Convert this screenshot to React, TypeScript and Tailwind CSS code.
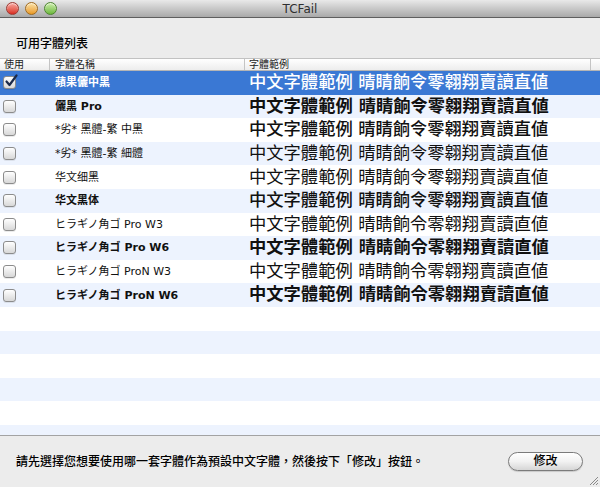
import React from 'react';

const FONT = '"DejaVu Sans", "Noto Sans CJK TC", sans-serif';

type Font = {
  name: string;
  nameBold: boolean;
  sample: string; // tailwind weight class
  lang: 'tc' | 'sc' | 'jp';
};

const FONTS: Font[] = [
  { name: '蘋果儷中黑', nameBold: true, sample: 'font-medium', lang: 'tc' },
  { name: '儷黑 Pro', nameBold: true, sample: 'font-bold', lang: 'tc' },
  { name: '*劣* 黑體-繁 中黑', nameBold: false, sample: 'font-medium', lang: 'tc' },
  { name: '*劣* 黑體-繁 細體', nameBold: false, sample: 'font-normal', lang: 'tc' },
  { name: '华文细黑', nameBold: false, sample: 'font-normal', lang: 'sc' },
  { name: '华文黑体', nameBold: true, sample: 'font-medium', lang: 'sc' },
  { name: 'ヒラギノ角ゴ Pro W3', nameBold: false, sample: 'font-normal', lang: 'jp' },
  { name: 'ヒラギノ角ゴ Pro W6', nameBold: true, sample: 'font-bold', lang: 'jp' },
  { name: 'ヒラギノ角ゴ ProN W3', nameBold: false, sample: 'font-normal', lang: 'jp' },
  { name: 'ヒラギノ角ゴ ProN W6', nameBold: true, sample: 'font-bold', lang: 'jp' },
];

const SAMPLE = '中文字體範例 晴睛餉令零翱翔賣讀直値';

const familyFor = (lang: Font['lang']) =>
  lang === 'jp'
    ? '"DejaVu Sans", "Noto Sans CJK JP", sans-serif'
    : lang === 'sc'
    ? '"DejaVu Sans", "Noto Sans CJK TC", "Noto Sans CJK SC", sans-serif'
    : FONT;

function Checkbox({ checked }: { checked?: boolean }) {
  return (
    <div className="relative w-[13px] h-[13px] rounded-[3px] border border-[#8c8c8c] bg-gradient-to-b from-white to-[#d8d8d8] shadow-[0_1px_0_rgba(0,0,0,0.08)]">
      {checked && (
        <svg viewBox="0 0 14 14" className="absolute -top-[3px] left-[0px] w-[14px] h-[14px]">
          <path d="M2.5 7.5 L5.5 11 L12.5 1.5" fill="none" stroke="#1b2a4a" strokeWidth="2.2" strokeLinecap="round" strokeLinejoin="round" />
        </svg>
      )}
    </div>
  );
}

function Light({ from, to, ring }: { from: string; to: string; ring: string }) {
  return (
    <div className={`w-[13px] h-[13px] rounded-full border ${ring} bg-gradient-to-b ${from} ${to} shadow-[inset_0_1px_1px_rgba(255,255,255,0.6)]`} />
  );
}

export default function App() {
  const empty = Array.from({ length: 6 }, (_, i) => i);

  return (
    <div className="w-[600px] h-[487px] bg-[#ececec] flex flex-col relative overflow-hidden text-black" style={{ fontFamily: FONT }}>
      {/* title bar */}
      <div className="h-[18px] shrink-0 relative flex items-center justify-center bg-gradient-to-b from-[#e9e9e9] to-[#a9a9a9] border-b border-[#5e5e5e]">
        <div className="absolute left-[6px] top-[2px] flex gap-[6px]">
          <Light from="from-[#f7a6a0]" to="to-[#d8281f]" ring="border-[#9c3a33]" />
          <Light from="from-[#fbe2a2]" to="to-[#e89a1d]" ring="border-[#a06a1f]" />
          <Light from="from-[#cdeeaa]" to="to-[#6cb83a]" ring="border-[#4d8430]" />
        </div>
        <span className="text-[12px] leading-none text-[#2f2f2f]">TCFail</span>
      </div>

      {/* label */}
      <div className="pt-[18px] pb-[6px] pl-[16px] h-[40px] shrink-0 flex items-center">
        <span className="text-[12px] leading-none font-medium">可用字體列表</span>
      </div>

      {/* table */}
      <div className="flex-1 flex flex-col bg-white min-h-0">
        <div className="h-[13px] shrink-0 flex border-t border-[#c2c2c2] border-b border-b-[#b5b5b5] bg-gradient-to-b from-white to-[#ededed] text-[10px] leading-none text-[#1a1a1a]">
          <div className="w-[50px] border-r border-[#c4c4c4] pl-[4px] flex items-center">使用</div>
          <div className="w-[195px] border-r border-[#c4c4c4] pl-[5px] flex items-center">字體名稱</div>
          <div className="w-[346px] border-r border-[#c4c4c4] pl-[4px] flex items-center">字體範例</div>
          <div className="flex-1" />
        </div>

        <div className="flex-1 flex flex-col overflow-hidden">
          {FONTS.map((f, i) => {
            const selected = i === 0;
            const bg = selected ? 'bg-[#3a78d4]' : i % 2 === 1 ? 'bg-[#edf3fe]' : 'bg-white';
            return (
              <div key={i} className={`h-[23.6px] shrink-0 flex items-center ${bg}`}>
                <div className="w-[50px] pl-[3px] flex items-center">
                  <Checkbox checked={selected} />
                </div>
                <div
                  className={`w-[195px] pl-[5px] text-[11px] leading-none whitespace-nowrap ${f.nameBold ? 'font-bold' : 'font-normal'} ${selected ? 'text-white' : 'text-[#111]'}`}
                  style={{ fontFamily: familyFor(f.lang) }}
                >
                  {f.name}
                </div>
                <div
                  className={`pl-[4px] text-[17.3px] leading-none whitespace-nowrap ${f.sample} ${selected ? 'text-white' : 'text-[#111]'}`}
                  style={{ fontFamily: familyFor(f.lang) }}
                >
                  {SAMPLE}
                </div>
              </div>
            );
          })}
          {empty.map(i => (
            <div key={`e${i}`} className={`h-[23.6px] shrink-0 ${i % 2 === 1 ? 'bg-[#edf3fe]' : 'bg-white'}`} />
          ))}
        </div>
      </div>

      {/* footer */}
      <div className="h-[52px] shrink-0 border-t border-[#a3a3a3] bg-[#ececec] flex items-center pl-[16px] pr-[17px] pb-[1px]">
        <span className="flex-1 text-[12px] leading-none font-medium pt-[2px]">請先選擇您想要使用哪一套字體作為預設中文字體，然後按下「修改」按鈕。</span>
        <button className="w-[75px] h-[19px] rounded-full border border-[#7b7b7b] bg-gradient-to-b from-white via-[#f2f2f2] to-[#d6d6d6] text-[12px] leading-none font-medium shadow-[0_1px_1px_rgba(0,0,0,0.15)]">
          修改
        </button>
      </div>

      {/* resize grip */}
      <svg className="absolute right-[1px] bottom-[1px] w-[11px] h-[11px]" viewBox="0 0 11 11">
        <path d="M10 2 L2 10 M10 5 L5 10 M10 8 L8 10" stroke="#8a8a8a" strokeWidth="1" />
      </svg>
    </div>
  );
}
